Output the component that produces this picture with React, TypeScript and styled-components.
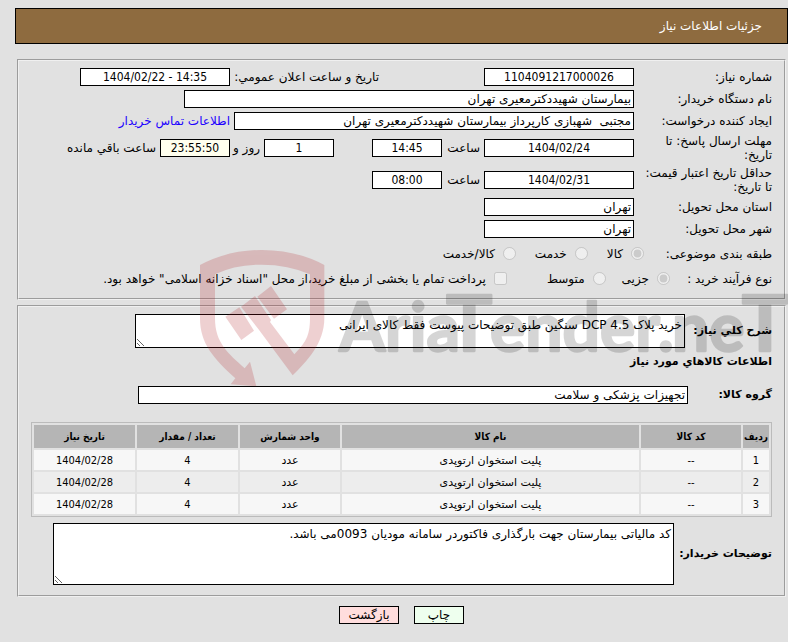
import React from "react";
import styled, { createGlobalStyle } from "styled-components";

const CONDENSED = '"DejaVu Sans Condensed", "DejaVu Sans", Tahoma, sans-serif';

const GlobalStyle = createGlobalStyle`
  * { box-sizing: border-box; }
  body {
    margin: 0;
    background: #e1e1e1;
    color: #000;
    font: 12px/14px "DejaVu Sans", Tahoma, sans-serif;
  }
`;

const Page = styled.div`
  position: relative;
  direction: rtl;
  padding: 8px 0 16px;
  overflow: hidden;
`;

const Header = styled.header`
  display: flex;
  align-items: center;
  height: 36px;
  margin-left: 15px;
  padding: 0 25px;
  border: 1px solid #000;
  background: #8e6b3f;
`;

const PageTitle = styled.h1`
  margin: 0;
  font-size: 12px;
  font-weight: normal;
  color: #fff;
`;

const Form = styled.form`
  display: flex;
  flex-direction: column;
  gap: 5px;
  padding: 15px 2px 0 17px;
`;

const Panel = styled.fieldset`
  display: flex;
  flex-direction: column;
  gap: 4px;
  min-width: 0;
  margin: 0;
  padding: 7px 12px 10px;
  border: 2px groove #f0f0f0;
`;

const Row = styled.div<{ $tall?: boolean }>`
  display: flex;
  align-items: center;
  gap: 4px;
  min-height: ${(p) => (p.$tall ? 24 : 18)}px;
`;

const Label = styled.label<{ $w?: number }>`
  flex: none;
  width: ${(p) => (p.$w ? `${p.$w}px` : "auto")};
  white-space: nowrap;
`;

const Spacer = styled.span<{ $w: number }>`
  flex: 0 1 ${(p) => p.$w}px;
`;

const Field = styled.input<{ $w: number; $center?: boolean; $bg?: string }>`
  flex: 0 1 ${(p) => p.$w}px;
  width: ${(p) => p.$w}px;
  min-width: 0;
  height: 18px;
  padding: 0 2px;
  border: 1px solid #000;
  background: ${(p) => p.$bg || "#fff"};
  color: #000;
  font-family: ${(p) => (p.$center ? CONDENSED : "inherit")};
  font-size: 12px;
  text-align: ${(p) => (p.$center ? "center" : "right")};
`;

const ContactLink = styled.a`
  color: #2000ff;
  text-decoration: none;
`;

const Choice = styled.label<{ $after: number }>`
  display: flex;
  align-items: center;
  gap: 8px;
  margin-left: ${(p) => p.$after}px;
`;

const Tick = styled.input`
  width: 13px;
  height: 13px;
  margin: 0 0 2px;
`;

const StrongLabel = styled(Label)`
  font-size: 11px;
  font-weight: bold;
`;

const SubTitle = styled.h2`
  margin: 1px 0 11px;
  font-size: 11px;
  line-height: 18px;
  font-weight: bold;
`;

const Area = styled.textarea<{ $w: number; $h: number }>`
  flex: 0 1 ${(p) => p.$w}px;
  min-width: 0;
  height: ${(p) => p.$h}px;
  padding: 2px;
  border: 1px solid #000;
  background: #fff;
  color: #000;
  font: inherit;
  line-height: 16px;
  overflow: hidden;
`;

const Goods = styled.table`
  width: 100%;
  margin: 14px 0 2px;
  border: 1px solid #bbb;
  border-collapse: separate;
  border-spacing: 2px;
  table-layout: fixed;
  text-align: center;
`;

const Col = styled.col<{ $w?: number }>`
  width: ${(p) => (p.$w ? `${p.$w}px` : "auto")};
`;

const Th = styled.th`
  height: 23px;
  padding: 0;
  background: #b5b5b5;
  font-family: ${CONDENSED};
  font-size: 10px;
  white-space: nowrap;
`;

const GoodsRow = styled.tr`
  background: #f7f7f7;
  &:nth-child(even) { background: #ededed; }
`;

const Td = styled.td<{ $num?: boolean }>`
  height: 20px;
  padding: 2px 0 0;
  font-family: ${(p) => (p.$num ? CONDENSED : "inherit")};
  font-size: 11px;
`;

const Actions = styled.div`
  display: flex;
  justify-content: center;
  gap: 15px;
  margin-top: 4px;
`;

const Button = styled.button<{ $w: number; $bg: string }>`
  width: ${(p) => p.$w}px;
  height: 18px;
  padding: 0;
  border: 1px solid #000;
  background: ${(p) => p.$bg};
  color: #000;
  font: inherit;
`;

const Watermark = styled.svg`
  position: absolute;
  top: 240px;
  right: 0;
  width: 598px;
  height: 150px;
  pointer-events: none;
`;

const goods = [1, 2, 3].map((n) => ({
  n, code: "--", name: "پلیت استخوان ارتوپدی", unit: "عدد", count: 4, date: "1404/02/28",
}));

export default function App() {
  return (
    <>
      <GlobalStyle />
      <Page lang="fa">
        <Header><PageTitle>جزئیات اطلاعات نیاز</PageTitle></Header>
        <Form>
          <Panel>
            <Row>
              <Label $w={134} htmlFor="number">شماره نیاز:</Label>
              <Field id="number" dir="ltr" $w={150} $center readOnly value="1104091217000026" />
              <Spacer $w={97} />
              <Label $w={145} htmlFor="announced">تاریخ و ساعت اعلان عمومي:</Label>
              <Field id="announced" dir="ltr" $w={150} $center readOnly value="1404/02/22 - 14:35" />
            </Row>
            <Row>
              <Label $w={134} htmlFor="buyer">نام دستگاه خریدار:</Label>
              <Field id="buyer" $w={450} readOnly value="بیمارستان شهیددکترمعیری تهران" />
            </Row>
            <Row>
              <Label $w={134} htmlFor="creator">ایجاد کننده درخواست:</Label>
              <Field id="creator" $w={400} readOnly value="مجتبی  شهبازی کارپرداز بیمارستان شهیددکترمعیری تهران" />
              <ContactLink href="#contact">اطلاعات تماس خریدار</ContactLink>
            </Row>
            <Row>
              <Label $w={134} htmlFor="reply-date">مهلت ارسال پاسخ: تا<br />تاریخ:</Label>
              <Field id="reply-date" dir="ltr" $w={150} $center readOnly value="1404/02/24" />
              <Label $w={34} htmlFor="reply-time">ساعت</Label>
              <Field id="reply-time" dir="ltr" $w={70} $center readOnly value="14:45" />
              <Spacer $w={30} />
              <Field id="days" $w={70} $center readOnly value="1" />
              <Label $w={26} htmlFor="days">روز و</Label>
              <Field id="remaining" dir="ltr" $w={70} $center $bg="#ffffee" readOnly value="23:55:50" />
              <Label htmlFor="remaining">ساعت باقي مانده</Label>
            </Row>
            <Row>
              <Label $w={134} htmlFor="price-date">حداقل تاریخ اعتبار قیمت:<br />تا تاریخ:</Label>
              <Field id="price-date" dir="ltr" $w={150} $center readOnly value="1404/02/31" />
              <Label $w={34} htmlFor="price-time">ساعت</Label>
              <Field id="price-time" dir="ltr" $w={70} $center readOnly value="08:00" />
            </Row>
            <Row>
              <Label $w={134} htmlFor="province">استان محل تحویل:</Label>
              <Field id="province" $w={150} readOnly value="تهران" />
            </Row>
            <Row>
              <Label $w={134} htmlFor="city">شهر محل تحویل:</Label>
              <Field id="city" $w={150} readOnly value="تهران" />
            </Row>
            <Row $tall role="radiogroup" aria-label="طبقه بندی موضوعی">
              <Label as="span" $w={124}>طبقه بندی موضوعی:</Label>
              <Choice $after={15}><Tick type="radio" name="subject" disabled defaultChecked />کالا</Choice>
              <Choice $after={15}><Tick type="radio" name="subject" disabled />خدمت</Choice>
              <Choice $after={0}><Tick type="radio" name="subject" disabled />کالا/خدمت</Choice>
            </Row>
            <Row role="radiogroup" aria-label="نوع فرآیند خرید">
              <Label as="span" $w={98}>نوع فرآیند خرید :</Label>
              <Choice $after={12}><Tick type="radio" name="process" disabled defaultChecked />جزیی</Choice>
              <Choice $after={36}><Tick type="radio" name="process" disabled />متوسط</Choice>
              <Choice $after={0}><Tick type="checkbox" disabled />پرداخت تمام یا بخشی از مبلغ خرید،از محل "اسناد خزانه اسلامی" خواهد بود.</Choice>
            </Row>
          </Panel>
          <Panel>
            <Row>
              <StrongLabel $w={83} htmlFor="summary">شرح کلي نیاز:</StrongLabel>
              <Area id="summary" $w={550} $h={34} readOnly value="خرید پلاک DCP 4.5 سنگین طبق توضیحات پیوست فقط کالای ایرانی" />
            </Row>
            <SubTitle>اطلاعات کالاهاي مورد نیاز</SubTitle>
            <Row>
              <StrongLabel $w={80} htmlFor="group">گروه کالا:</StrongLabel>
              <Field id="group" $w={550} readOnly value="تجهیزات پزشکی و سلامت" />
            </Row>
            <Goods>
              <colgroup>
                <Col $w={26} /><Col $w={100} /><Col /><Col $w={100} /><Col $w={101} /><Col $w={101} />
              </colgroup>
              <thead>
                <tr>
                  <Th>ردیف</Th><Th>کد کالا</Th><Th>نام کالا</Th><Th>واحد شمارش</Th><Th>تعداد / مقدار</Th><Th>تاریخ نیاز</Th>
                </tr>
              </thead>
              <tbody>
                {goods.map((g) => (
                  <GoodsRow key={g.n}>
                    <Td $num>{g.n}</Td><Td $num>{g.code}</Td><Td>{g.name}</Td><Td>{g.unit}</Td><Td $num>{g.count}</Td><Td $num>{g.date}</Td>
                  </GoodsRow>
                ))}
              </tbody>
            </Goods>
            <Row>
              <StrongLabel $w={94} htmlFor="notes">توضیحات خریدار:</StrongLabel>
              <Area id="notes" $w={621} $h={62} readOnly value="کد مالیاتی بیمارستان جهت بارگذاری فاکتوردر سامانه مودیان 0093می باشد." />
            </Row>
          </Panel>
          <Actions>
            <Button type="button" $w={50} $bg="#eeffee">چاپ</Button>
            <Button type="button" $w={60} $bg="#ffdddd">بازگشت</Button>
          </Actions>
        </Form>
        <Watermark viewBox="0 0 1794 450" direction="ltr" aria-hidden="true">
          <g fill="#b01820" opacity="0.2">
            <path d="M30 75Q115 30 215 30Q320 30 403 75V235C403 310 350 365 308 406L205 267L153 200L195 168L243 240L240 246L313 343C345 310 360 290 360 235V103Q295 74 215 74Q135 74 75 103V235C75 310 115 340 164 385L180 365L199 439L122 433L136 415C70 355 30 310 30 235Z" />
            <path d="M106 230L148 202L192 272L154 300ZM202 170L243 138L291 208L252 236Z" />
          </g>
          <text y="334" fill="#000" stroke="#000" strokeWidth="7" strokeLinejoin="round" opacity="0.16" fontFamily="Lato, sans-serif" fontWeight="bold" fontSize="198">
            <tspan x="448">Aria</tspan><tspan x="768" fontSize="232">T</tspan><tspan x="900">ender</tspan><tspan x="1404">.</tspan><tspan x="1446">ne</tspan><tspan x="1655" fontSize="232">T</tspan>
          </text>
        </Watermark>
      </Page>
    </>
  );
}
